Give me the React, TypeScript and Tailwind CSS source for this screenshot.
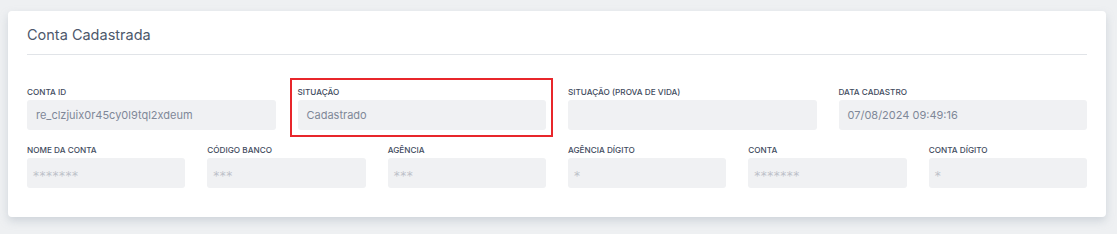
import React from 'react';

type Field = { label: string; value?: string; masked?: boolean; highlight?: boolean };

const topRow: Field[] = [
  { label: 'Conta ID', value: 're_clzjuix0r45cy0l9tql2xdeum' },
  { label: 'Situação', value: 'Cadastrado', highlight: true },
  { label: 'Situação (Prova de vida)', value: '' },
  { label: 'Data Cadastro', value: '07/08/2024 09:49:16' },
];

const bottomRow: Field[] = [
  { label: 'Nome da conta', value: '*******', masked: true },
  { label: 'Código banco', value: '***', masked: true },
  { label: 'Agência', value: '***', masked: true },
  { label: 'Agência dígito', value: '*', masked: true },
  { label: 'Conta', value: '*******', masked: true },
  { label: 'Conta dígito', value: '*', masked: true },
];

function FieldBox({ field }: { field: Field }) {
  return (
    <div className="relative flex flex-col">
      {/* annotation frame */}
      {field.highlight && (
        <div className="pointer-events-none absolute -left-[8px] -right-[7px] -top-[9px] -bottom-[7px] border-[2.5px] border-[#e8262b]" />
      )}
      <label className="mb-[3px] h-[10px] text-[8.2px] font-medium uppercase leading-[10px] text-[#3f4b5e]">
        {field.label}
      </label>
      <div className="flex h-[30px] items-center rounded-[3px] bg-[#f0f1f3] px-[6px]">
        {field.masked ? (
          <span className="pt-[5px] font-['DejaVu_Sans',sans-serif] text-[12px] leading-[12px] tracking-[0.5px] text-[#bcc0c8]">
            {field.value}
          </span>
        ) : (
          <span className="pl-[3px] text-[11px] text-[#7f8898]">{field.value}</span>
        )}
      </div>
    </div>
  );
}

export default function App() {
  return (
    <div className="h-[234px] w-[1117px] bg-[#eef0f2] pl-[8px] pt-[11px] font-['Inter','Open_Sans',Arial,sans-serif]">
      <div className="w-[1098px] rounded-[4px] bg-white px-[19px] pb-[29px] pt-[14px] shadow-[0_4px_8px_rgba(150,160,175,0.35)]">
        {/* Header */}
        <h2 className="h-[20px] text-[14.5px] leading-[20px] text-[#4d586b]">Conta Cadastrada</h2>
        <div className="mt-[9px] h-px bg-[#e1e4e8]" />

        {/* Top fields */}
        <div className="mt-[32px] grid grid-cols-4 gap-x-[22px]">
          {topRow.map((f) => (
            <FieldBox key={f.label} field={f} />
          ))}
        </div>

        {/* Bottom fields */}
        <div className="mt-[15px] grid grid-cols-6 gap-x-[22px]">
          {bottomRow.map((f) => (
            <FieldBox key={f.label} field={f} />
          ))}
        </div>
      </div>
    </div>
  );
}
